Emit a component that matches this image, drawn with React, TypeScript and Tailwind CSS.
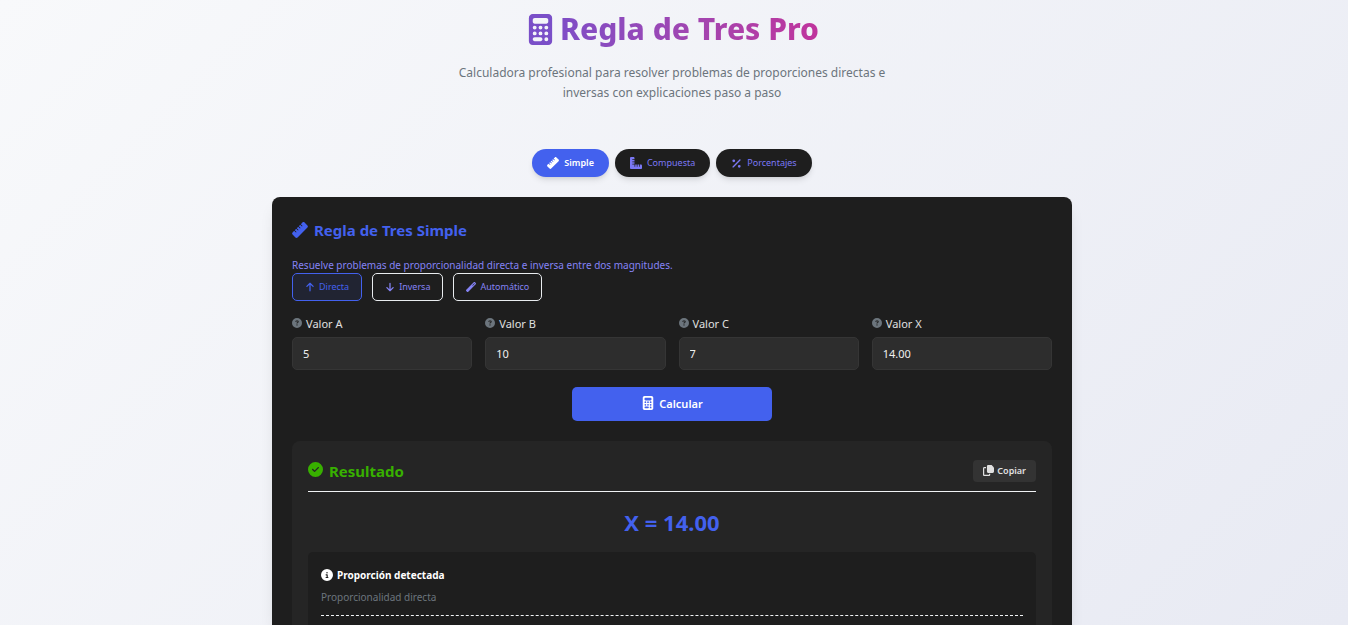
import type { ReactNode } from "react";
import {
  FaArrowDown,
  FaArrowUp,
  FaCalculator,
  FaCircleCheck,
  FaCircleInfo,
  FaCircleQuestion,
  FaPercent,
  FaRuler,
  FaRulerCombined,
  FaWandMagic,
} from "react-icons/fa6";

function CopyIcon() {
  return (
    <svg viewBox="0 0 512 512" fill="currentColor" className="mb-[2px] size-[11px]" aria-hidden="true">
      <path d="M240 0c-35.3 0-56 28.7-56 64V304c0 35.3 20.7 64 56 64H448c35.3 0 64-28.7 64-64V112L400 0H240z" />
      <path d="M64 96c-35.3 0-64 28.7-64 64V448c0 35.3 28.7 64 64 64H272c35.3 0 64-28.7 64-64V410H280v46H56V152h84V96H64z" />
    </svg>
  );
}

function Tab({ icon, label, active = false }: { icon: ReactNode; label: string; active?: boolean }) {
  return (
    <button
      type="button"
      aria-pressed={active}
      className={`flex h-7 items-center gap-[5px] rounded-full px-[15px] text-[9px] shadow-md ${
        active ? "bg-[#4361ee] font-semibold text-white" : "bg-[#1e1e1e] text-[#7b78f5]"
      }`}
    >
      {icon}
      {label}
    </button>
  );
}

function Mode({ icon, label, active = false }: { icon: ReactNode; label: string; active?: boolean }) {
  return (
    <button
      type="button"
      aria-pressed={active}
      className={`flex h-7 items-center gap-1 rounded-[5px] border px-3 text-[9px] ${
        active
          ? "border-[#4361ee] bg-[#4361ee]/10 text-[#4361ee]"
          : "border-[#e9ecef] text-[#8583f5]"
      }`}
    >
      <span className="text-[10px]">{icon}</span>
      {label}
    </button>
  );
}

function Field({ id, label, value }: { id: string; label: string; value: string }) {
  return (
    <div className="flex min-w-0 flex-col gap-[5px]">
      <label htmlFor={id} className="flex h-4 items-center gap-1 text-[11px] text-[#e0e0e0]">
        <FaCircleQuestion className="mb-[3px] size-[10px] text-[#6c757d]" />
        {label}
      </label>
      <input
        id={id}
        defaultValue={value}
        className="h-[33px] w-full rounded-[5px] border border-[#353535] bg-[#2d2d2d] px-[10px] text-[11px] text-[#f0f0f0] outline-none"
      />
    </div>
  );
}

export default function App() {
  return (
    <div className="flex min-h-screen flex-col items-center bg-linear-135 from-[#f8f9fb] to-[#e8eaf3] pr-1 font-['Noto_Sans',sans-serif]">
      <header className="flex flex-col items-center pt-[7px] text-center">
        <h1 className="flex items-center gap-1 text-[30px] leading-[44px] font-extrabold">
          <FaCalculator className="size-[31px] text-[#7a4fc8]" />
          <span className="bg-linear-to-r from-[#7f4dc6] to-[#c0339c] bg-clip-text text-transparent">
            Regla de Tres Pro
          </span>
        </h1>
        <p className="mt-3 max-w-[450px] text-xs leading-5 text-[#6c757d]">
          Calculadora profesional para resolver problemas de proporciones directas e inversas con
          explicaciones paso a paso
        </p>
      </header>

      <nav className="mt-[46px] flex gap-[6px]">
        <Tab active icon={<FaRuler className="size-3" />} label="Simple" />
        <Tab icon={<FaRulerCombined className="size-3" />} label="Compuesta" />
        <Tab icon={<FaPercent className="size-[11px]" />} label="Porcentajes" />
      </nav>

      <main className="mt-5 flex w-full max-w-[800px] flex-1 flex-col rounded-t-lg bg-[#1e1e1e] px-5 pt-5 shadow-lg">
        <h2 className="flex h-[26px] items-center gap-[6px] text-[15px] font-bold text-[#4361ee]">
          <FaRuler className="size-4" />
          Regla de Tres Simple
        </h2>
        <p className="mt-[14px] text-[10px] leading-4 text-[#8583f5]">
          Resuelve problemas de proporcionalidad directa e inversa entre dos magnitudes.
        </p>
        <div className="flex gap-[10px]">
          <Mode active icon={<FaArrowUp />} label="Directa" />
          <Mode icon={<FaArrowDown />} label="Inversa" />
          <Mode icon={<FaWandMagic />} label="Automático" />
        </div>

        <form className="mt-[15px] flex flex-col items-center" onSubmit={(e) => e.preventDefault()}>
          <div className="grid w-full grid-cols-4 gap-[13px]">
            <Field id="a" label="Valor A" value="5" />
            <Field id="b" label="Valor B" value="10" />
            <Field id="c" label="Valor C" value="7" />
            <Field id="x" label="Valor X" value="14.00" />
          </div>
          <button
            type="submit"
            className="mt-[17px] flex h-[34px] w-[200px] items-center justify-center gap-1 rounded-[5px] bg-[#4361ee] text-[11px] font-semibold text-white"
          >
            <FaCalculator className="mb-[2px] size-[14px]" />
            Calcular
          </button>
        </form>

        <section className="mt-5 flex flex-1 flex-col rounded-t-lg bg-[#252525] px-4 pt-4">
          <div className="flex h-[35px] items-start justify-between border-b border-[#f1f3f5]">
            <h3 className="flex h-7 items-center gap-[6px] text-[15px] font-bold text-[#38b000]">
              <FaCircleCheck className="mb-[3px] size-[15px]" />
              Resultado
            </h3>
            <button
              type="button"
              className="mt-[3px] flex h-[22px] items-center gap-[3px] rounded-[4px] bg-[#333333] px-[10px] text-[9px] font-semibold text-[#e0e0e0]"
            >
              <CopyIcon />
              Copiar
            </button>
          </div>
          <p className="mt-[14px] text-center text-[22px] leading-8 font-bold text-[#4361ee]">X = 14.00</p>
          <div className="mt-[14px] flex-1 rounded-t-[5px] bg-[#1e1e1e] px-[13px] pt-[13px]">
            <div className="border-b border-dashed border-[#f1f3f5] pb-[10px]">
              <h4 className="flex h-5 items-center gap-1 text-[10px] font-bold text-white">
                <FaCircleInfo className="size-3" />
                Proporción detectada
              </h4>
              <p className="mt-1 text-[10px] leading-4 text-[#6c757d]">Proporcionalidad directa</p>
            </div>
          </div>
        </section>
      </main>
    </div>
  );
}
